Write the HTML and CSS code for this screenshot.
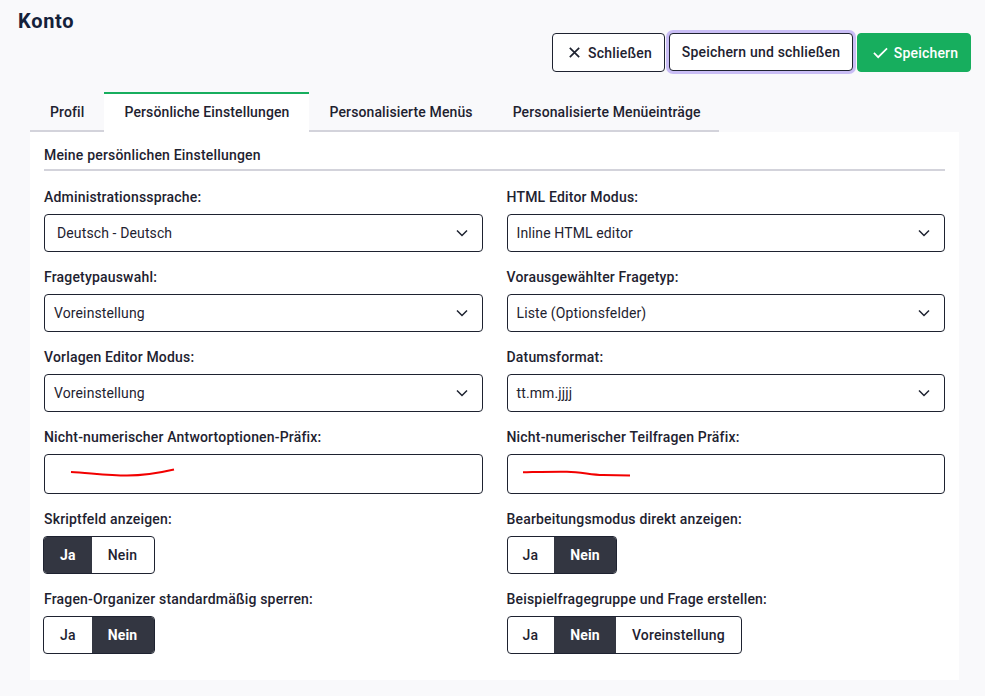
FILE: index.html
```html
<!DOCTYPE html>
<html lang="de">
  <head>
    <meta charset="UTF-8" />
    <meta name="viewport" content="width=device-width, initial-scale=1.0" />
    <title>Konto</title>
    <link rel="stylesheet" href="styles.css">
  </head>
  <body>
    <div class="page">
      <h1 class="page-title">Konto</h1>

      <div class="actions">
        <button class="btn btn-close">
          <svg class="btn-icon" viewBox="0 0 16 16"><path d="M3 3l10 10M13 3L3 13" /></svg>
          Schließen
        </button>
        <button class="btn btn-focus">Speichern und schließen</button>
        <button class="btn btn-save">
          <svg class="btn-icon" viewBox="0 0 16 16"><path d="M1 8.500l4.500 4.500L15 3.500" /></svg>
          Speichern
        </button>
      </div>

      <div class="tabs">
        <div class="tab">Profil</div>
        <div class="tab tab-active">Persönliche Einstellungen</div>
        <div class="tab">Personalisierte Menüs</div>
        <div class="tab">Personalisierte Menüeinträge</div>
      </div>

      <div class="panel">
        <h2 class="panel-title">Meine persönlichen Einstellungen</h2>

        <div class="form-grid">
          <div class="field">
            <label class="label">Administrationssprache:</label>
            <div class="select select-wide">Deutsch - Deutsch
              <svg class="chevron" viewBox="0 0 12 8"><path d="M1 1.500l5 5 5-5" /></svg>
            </div>
          </div>
          <div class="field">
            <label class="label">HTML Editor Modus:</label>
            <div class="select">Inline HTML editor
              <svg class="chevron" viewBox="0 0 12 8"><path d="M1 1.500l5 5 5-5" /></svg>
            </div>
          </div>

          <div class="field">
            <label class="label">Fragetypauswahl:</label>
            <div class="select select-narrow">Voreinstellung
              <svg class="chevron" viewBox="0 0 12 8"><path d="M1 1.500l5 5 5-5" /></svg>
            </div>
          </div>
          <div class="field">
            <label class="label">Vorausgewählter Fragetyp:</label>
            <div class="select">Liste (Optionsfelder)
              <svg class="chevron" viewBox="0 0 12 8"><path d="M1 1.500l5 5 5-5" /></svg>
            </div>
          </div>

          <div class="field">
            <label class="label">Vorlagen Editor Modus:</label>
            <div class="select select-narrow">Voreinstellung
              <svg class="chevron" viewBox="0 0 12 8"><path d="M1 1.500l5 5 5-5" /></svg>
            </div>
          </div>
          <div class="field">
            <label class="label">Datumsformat:</label>
            <div class="select">tt.mm.jjjj
              <svg class="chevron" viewBox="0 0 12 8"><path d="M1 1.500l5 5 5-5" /></svg>
            </div>
          </div>

          <div class="field">
            <label class="label">Nicht-numerischer Antwortoptionen-Präfix:</label>
            <div class="input">
              <svg class="scribble" viewBox="0 0 439 40">
                <path d="M27 18C45 19 65 21.500 83 21.500 100 21.500 115 19 130 15.500" />
              </svg>
            </div>
          </div>
          <div class="field">
            <label class="label">Nicht-numerischer Teilfragen Präfix:</label>
            <div class="input">
              <svg class="scribble" viewBox="0 0 439 40">
                <path d="M16 18.300C30 18 48 17.400 60 17.700 75 18 84 21 96 21L123 21.500" />
              </svg>
            </div>
          </div>

          <div class="field">
            <label class="label">Skriptfeld anzeigen:</label>
            <div class="toggle toggle-left">
              <span class="toggle-item toggle-on">Ja</span>
              <span class="toggle-item">Nein</span>
            </div>
          </div>
          <div class="field">
            <label class="label">Bearbeitungsmodus direkt anzeigen:</label>
            <div class="toggle toggle-right">
              <span class="toggle-item">Ja</span>
              <span class="toggle-item toggle-on">Nein</span>
            </div>
          </div>

          <div class="field">
            <label class="label">Fragen-Organizer standardmäßig sperren:</label>
            <div class="toggle toggle-left">
              <span class="toggle-item">Ja</span>
              <span class="toggle-item toggle-on">Nein</span>
            </div>
          </div>
          <div class="field">
            <label class="label">Beispielfragegruppe und Frage erstellen:</label>
            <div class="toggle toggle-right">
              <span class="toggle-item">Ja</span>
              <span class="toggle-item toggle-on">Nein</span>
              <span class="toggle-item">Voreinstellung</span>
            </div>
          </div>
        </div>
      </div>
    </div>
  </body>
</html>
```

FILE: styles.css
```css
* {
  margin: 0;
  padding: 0;
  box-sizing: border-box;
}

body {
  font-family: Roboto, "Liberation Sans", sans-serif;
  font-size: 14px;
  letter-spacing: 0.18px;
  color: #1e2230;
  background-color: #f9f9fb;
}

.page {
  height: 696px;
  overflow: hidden;
  padding: 10px 14px 0 18px;
}

.page-title {
  font-size: 20px;
  line-height: 23px;
  font-weight: 700;
  letter-spacing: 0.7px;
  color: #14213a;
}

.actions {
  display: flex;
  justify-content: flex-end;
  align-items: flex-start;
  gap: 4px;
}

.btn {
  display: flex;
  align-items: center;
  justify-content: center;
  gap: 6px;
  height: 39px;
  font-family: inherit;
  font-size: 14px;
  font-weight: 500;
  letter-spacing: 0.2px;
  color: #1e2230;
  background-color: white;
  border: 1px solid #1e2230;
  border-radius: 4px;
}

.btn-icon {
  width: 15px;
  height: 15px;
  fill: none;
  stroke: currentColor;
  stroke-width: 1.800;
}

.btn-close {
  width: 113px;
  padding-left: 2px;
}

.btn-focus {
  width: 184px;
  height: 38px;
  box-shadow: 0 0 0 3px #c9bdf5;
}

.btn-save {
  width: 114px;
  padding-left: 3px;
  color: white;
  background-color: #17ae5e;
  border-color: #17ae5e;
}

.tabs {
  display: flex;
  width: 689px;
  height: 40px;
  margin: 20px 0 0 12px;
  border-bottom: 2px solid #d3d3db;
}

.tab {
  height: 40px;
  padding: 2px 20px 0;
  line-height: 36px;
  font-weight: 500;
  letter-spacing: 0.12px;
  white-space: nowrap;
}

.tab-active {
  width: 206px;
  background-color: white;
  border-top: 2px solid #17ae5e;
  padding-top: 0;
}

.panel {
  width: 929px;
  margin-left: 12px;
  padding: 13px 14px 11px;
  background-color: white;
}

.panel-title {
  font-size: 14px;
  line-height: 20px;
  font-weight: 500;
  padding-bottom: 4px;
  border-bottom: 2px solid #d3d3db;
}

.form-grid {
  display: grid;
  grid-template-columns: 1fr 1fr;
  column-gap: 24px;
  margin-top: 16px;
}

.field {
  margin-bottom: 15px;
}

.label {
  display: block;
  line-height: 20px;
  margin-bottom: 7px;
  font-weight: 500;
}

.select {
  display: flex;
  align-items: center;
  justify-content: space-between;
  height: 38px;
  padding: 0 14px 0 9px;
  letter-spacing: 0.12px;
  background-color: white;
  border: 1px solid #1e2230;
  border-radius: 4px;
}

.select-wide {
  padding-left: 12px;
}

.chevron {
  width: 12px;
  height: 8px;
  fill: none;
  stroke: #1e2230;
  stroke-width: 1.500;
}

.input {
  position: relative;
  height: 40px;
  background-color: white;
  border: 1px solid #1e2230;
  border-radius: 4px;
}

.scribble {
  position: absolute;
  top: -1px;
  left: -1px;
  width: 439px;
  height: 40px;
  fill: none;
  stroke: #f20000;
  stroke-width: 2;
}

.toggle {
  display: inline-flex;
  height: 38px;
  border: 1px solid #1e2230;
  border-radius: 4px;
  overflow: hidden;
}

.toggle-left {
  margin-left: -1px;
}

.toggle-left .toggle-item:nth-child(2) {
  padding-right: 17px;
}

.toggle-right .toggle-item:first-child {
  padding-left: 15px;
}

.toggle-item {
  display: flex;
  align-items: center;
  padding: 0 16px;
  font-weight: 500;
}

.toggle-on {
  color: white;
  font-weight: 700;
  background-color: #333641;
}
```
